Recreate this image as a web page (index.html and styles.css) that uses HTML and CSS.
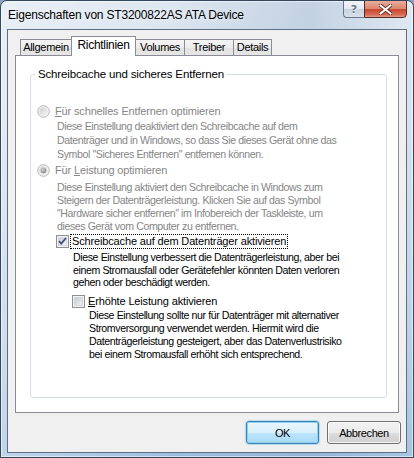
FILE: index.html
```html
<!DOCTYPE html>
<html lang="de">
<head>
<meta charset="utf-8">
<title>Eigenschaften von ST3200822AS ATA Device</title>
<link rel="stylesheet" href="styles.css">
</head>
<body>
<div class="window">
  <div class="titlebar">
    <div class="title">Eigenschaften von ST3200822AS ATA Device</div>
    <div class="caption-buttons">
      <div class="cbtn help">?</div>
      <div class="cbtn close">
        <svg width="13" height="11" viewBox="0 0 13 11"><path d="M1.5 1.5 L11.5 9.5 M11.5 1.5 L1.5 9.5" stroke="#5a1f14" stroke-width="3.6" stroke-linecap="square" fill="none"/><path d="M1.5 1.5 L11.5 9.5 M11.5 1.5 L1.5 9.5" stroke="#ffffff" stroke-width="2" stroke-linecap="square" fill="none"/></svg>
      </div>
    </div>
  </div>
  <div class="client">
    <div class="tabs">
      <div class="tab tab-allgemein">Allgemein</div>
      <div class="tab active tab-richtlinien">Richtlinien</div>
      <div class="tab tab-volumes">Volumes</div>
      <div class="tab tab-treiber">Treiber</div>
      <div class="tab tab-details">Details</div>
    </div>
    <div class="page">
      <div class="group">
        <div class="group-title">Schreibcache und sicheres Entfernen</div>

        <div class="option disabled opt-radio1">
          <svg class="radio" width="13" height="13" viewBox="0 0 13 13"><defs><linearGradient id="rg1" x1="0" y1="0" x2="1" y2="1"><stop offset="0" stop-color="#cfcfcf"/><stop offset="1" stop-color="#f4f4f4"/></linearGradient></defs><circle cx="6.5" cy="6.5" r="5.8" fill="#f4f4f4" stroke="#b5b5b5" stroke-width="1"/><circle cx="6.5" cy="6.5" r="4.3" fill="url(#rg1)"/></svg>
          <span class="label"><u>F</u>ür schnelles Entfernen optimieren</span>
        </div>
        <div class="desc disabled desc1">Diese Einstellung deaktiviert den Schreibcache auf dem<br>Datenträger und in Windows, so dass Sie dieses Gerät ohne das<br>Symbol "Sicheres Entfernen" entfernen können.</div>

        <div class="option disabled opt-radio2">
          <svg class="radio" width="13" height="13" viewBox="0 0 13 13"><defs><linearGradient id="rg2" x1="0" y1="0" x2="1" y2="1"><stop offset="0" stop-color="#cfcfcf"/><stop offset="1" stop-color="#f4f4f4"/></linearGradient><radialGradient id="rd2" cx="0.4" cy="0.35" r="0.7"><stop offset="0" stop-color="#d8d8d8"/><stop offset="1" stop-color="#7d7d7d"/></radialGradient></defs><circle cx="6.5" cy="6.5" r="5.8" fill="#f4f4f4" stroke="#b5b5b5" stroke-width="1"/><circle cx="6.5" cy="6.5" r="4.3" fill="url(#rg2)"/><circle cx="6.5" cy="6.5" r="2.8" fill="url(#rd2)"/></svg>
          <span class="label">Für <u>L</u>eistung optimieren</span>
        </div>
        <div class="desc disabled desc2">Diese Einstellung aktiviert den Schreibcache in Windows zum<br>Steigern der Datenträgerleistung. Klicken Sie auf das Symbol<br>"Hardware sicher entfernen" im Infobereich der Taskleiste, um<br>dieses Gerät vom Computer zu entfernen.</div>

        <div class="option opt-cb1">
          <svg class="check" width="13" height="13" viewBox="0 0 13 13"><defs><linearGradient id="cg1" x1="0" y1="0" x2="1" y2="1"><stop offset="0" stop-color="#cbcfd5"/><stop offset="1" stop-color="#f6f6f6"/></linearGradient></defs><rect x="0.5" y="0.5" width="12" height="12" fill="#f4f4f4" stroke="#8e8f8f"/><rect x="2.5" y="2.5" width="8" height="8" fill="url(#cg1)" stroke="#d6d9de"/><path d="M3 6.2 L5.2 8.6 L10 3" stroke="#3f4f7f" stroke-width="1.8" fill="none"/></svg>
          <span class="label focus">Schreibcache auf dem Datenträger aktivieren</span>
        </div>
        <div class="desc desc3">Diese Einstellung verbessert die Datenträgerleistung, aber bei<br>einem Stromausfall oder Gerätefehler könnten Daten verloren<br>gehen oder beschädigt werden.</div>

        <div class="option opt-cb2">
          <svg class="check" width="13" height="13" viewBox="0 0 13 13"><defs><linearGradient id="cg2" x1="0" y1="0" x2="1" y2="1"><stop offset="0" stop-color="#c6c9ce"/><stop offset="1" stop-color="#f2f2f2"/></linearGradient></defs><rect x="0.5" y="0.5" width="12" height="12" fill="#f4f4f4" stroke="#8e8f8f"/><rect x="2.5" y="2.5" width="8" height="8" fill="url(#cg2)" stroke="#d2d5da"/></svg>
          <span class="label"><u>E</u>rhöhte Leistung aktivieren</span>
        </div>
        <div class="desc desc4">Diese Einstellung sollte nur für Datenträger mit alternativer<br>Stromversorgung verwendet werden. Hiermit wird die<br>Datenträgerleistung gesteigert, aber das Datenverlustrisiko<br>bei einem Stromausfall erhöht sich entsprechend.</div>
      </div>
    </div>
    <div class="buttons">
      <div class="btn default">OK</div>
      <div class="btn">Abbrechen</div>
    </div>
  </div>
</div>
</body>
</html>
```
FILE: styles.css
```css
html, body {
  margin: 0;
  padding: 0;
}
body {
  width: 414px;
  height: 458px;
  overflow: hidden;
  background: #8aa4bf;
  font-family: "Liberation Sans", Arial, sans-serif;
  font-size: 10.6px;
  letter-spacing: -0.4px;
  color: #000;
}
.window {
  width: 414px;
  height: 458px;
  box-sizing: border-box;
  border: 1px solid #34465c;
  border-radius: 7px 7px 0 0;
  background:
    linear-gradient(90deg, rgba(255,255,255,0.35) 0, rgba(255,255,255,0) 40%, rgba(120,150,185,0.25) 75%, rgba(255,255,255,0.1) 100%),
    linear-gradient(180deg, #dde7f1 0%, #d2dfec 30%, #b7cfe6 70%, #9dbfdf 100%);
  box-shadow: inset 0 0 0 1px rgba(255,255,255,0.55);
  display: flex;
  flex-direction: column;
  overflow: hidden;
}
.titlebar {
  height: 28px;
  display: flex;
  justify-content: space-between;
  align-items: flex-start;
  flex: none;
}
.title {
  padding: 7px 0 0 7px;
  font-size: 12px;
  letter-spacing: -0.2px;
  line-height: 15px;
  color: #000;
  text-shadow: 0 0 6px rgba(255,255,255,0.9);
}
.caption-buttons {
  display: flex;
  margin-top: -1px;
  margin-right: 6px;
}
.cbtn {
  height: 18px;
  box-sizing: border-box;
  display: flex;
  align-items: center;
  justify-content: center;
}
.help {
  width: 21px;
  border: 1px solid #6b7789;
  border-right: none;
  border-radius: 0 0 0 4px;
  background: linear-gradient(180deg, #f1f5f9 0%, #e2e9f1 50%, #c9d3df 51%, #d8e0ea 100%);
  color: #6a7687;
  font-family: "DejaVu Sans", sans-serif;
  font-weight: bold;
  font-size: 11px;
  letter-spacing: 0;
  line-height: 1;
  text-shadow: 0 1px 0 #fff;
}
.close {
  width: 43px;
  border: 1px solid #5b2a22;
  border-radius: 0 0 4px 0;
  background: linear-gradient(180deg, #e9ad9e 0%, #dd8670 48%, #c8472f 52%, #d56a52 85%, #e3a08c 100%);
}
.client {
  margin: 0 6px;
  height: 424px;
  box-sizing: border-box;
  border: 1px solid #5e6f83;
  background: #f0f0f0;
  display: flex;
  flex-direction: column;
  flex: none;
}
.tabs {
  display: flex;
  align-items: flex-end;
  margin: 6px 0 0 12px;
  height: 19px;
  position: relative;
  z-index: 2;
}
.tab {
  height: 16px;
  box-sizing: border-box;
  border: 1px solid #898c95;
  border-bottom: none;
  background: linear-gradient(180deg, #f4f4f4 0%, #ececec 50%, #e2e2e2 51%, #e6e6e6 100%);
  text-align: center;
  font-size: 11px;
  letter-spacing: -0.3px;
  line-height: 15px;
  margin-left: -1px;
  white-space: nowrap;
}
.tab-allgemein {
  margin-left: 0;
  width: 52px;
}
.tab-richtlinien {
  width: 65px;
}
.tab-volumes {
  width: 50px;
}
.tab-treiber {
  width: 50px;
}
.tab-details {
  width: 39px;
}
.tab.active {
  height: 20px;
  margin-bottom: -1px;
  background: #ffffff;
  line-height: 16px;
  font-size: 12px;
  letter-spacing: -0.3px;
  position: relative;
  z-index: 3;
}
.page {
  margin-left: 7px;
  width: 384px;
  height: 358px;
  box-sizing: border-box;
  border: 1px solid #898c95;
  background: #ffffff;
  padding: 18px 11px 0 14px;
  flex: none;
}
.group {
  height: 324px;
  box-sizing: border-box;
  border: 1px solid #d5dfe5;
  border-radius: 3px;
  box-shadow: inset 0 0 0 1px #ffffff;
}
.group-title {
  display: block;
  width: max-content;
  margin: -7px 0 0 5px;
  padding: 0 2px;
  background: #ffffff;
  font-size: 11.5px;
  letter-spacing: -0.15px;
  line-height: 13px;
}
.option {
  display: flex;
  align-items: center;
  height: 13px;
  line-height: 13px;
  white-space: nowrap;
}
.option .label {
  font-size: 11px;
  letter-spacing: -0.15px;
}
.option u, .label u {
  text-decoration: underline;
  text-underline-offset: 1px;
}
.disabled {
  color: #868686;
}
.radio, .check {
  flex: none;
  display: block;
}
.opt-radio1 {
  margin: 24px 0 0 6px;
  gap: 5px;
}
.opt-radio2 {
  margin: 3px 0 0 6px;
  gap: 5px;
}
.opt-cb1 {
  margin: 2px 0 0 25px;
  gap: 2px;
}
.opt-cb2 {
  margin: 6px 0 0 41px;
  gap: 3px;
}
.focus {
  outline: 1px dotted #000;
  outline-offset: 0;
  padding: 0 1px;
}
.desc {
  white-space: nowrap;
}
.desc1 {
  margin: 1px 0 0 26px;
  line-height: 14px;
}
.desc2 {
  margin: 4px 0 0 26px;
  line-height: 13px;
}
.desc3 {
  margin: 3px 0 0 42px;
  line-height: 12.5px;
}
.desc4 {
  margin: 1px 0 0 58px;
  line-height: 13.3px;
}
.buttons {
  display: flex;
  justify-content: flex-end;
  gap: 8px;
  margin: 8px 5px 0 0;
}
.btn {
  height: 23px;
  box-sizing: border-box;
  border: 1px solid #707070;
  border-radius: 3px;
  background: linear-gradient(180deg, #f2f2f2 0%, #ebebeb 50%, #dddddd 51%, #cfcfcf 100%);
  box-shadow: inset 0 0 0 1px rgba(255,255,255,0.8);
  display: flex;
  align-items: center;
  justify-content: center;
  font-size: 11px;
  width: 74px;
}
.btn.default {
  width: 73px;
  border-color: #3c7fb1;
  background: linear-gradient(180deg, #eaf6fd 0%, #d9f0fc 50%, #bee6fd 51%, #a7d9f5 100%);
  box-shadow: inset 0 0 0 1px #8fd2f5, 0 0 1px 1px rgba(120,200,240,0.5);
}
```
